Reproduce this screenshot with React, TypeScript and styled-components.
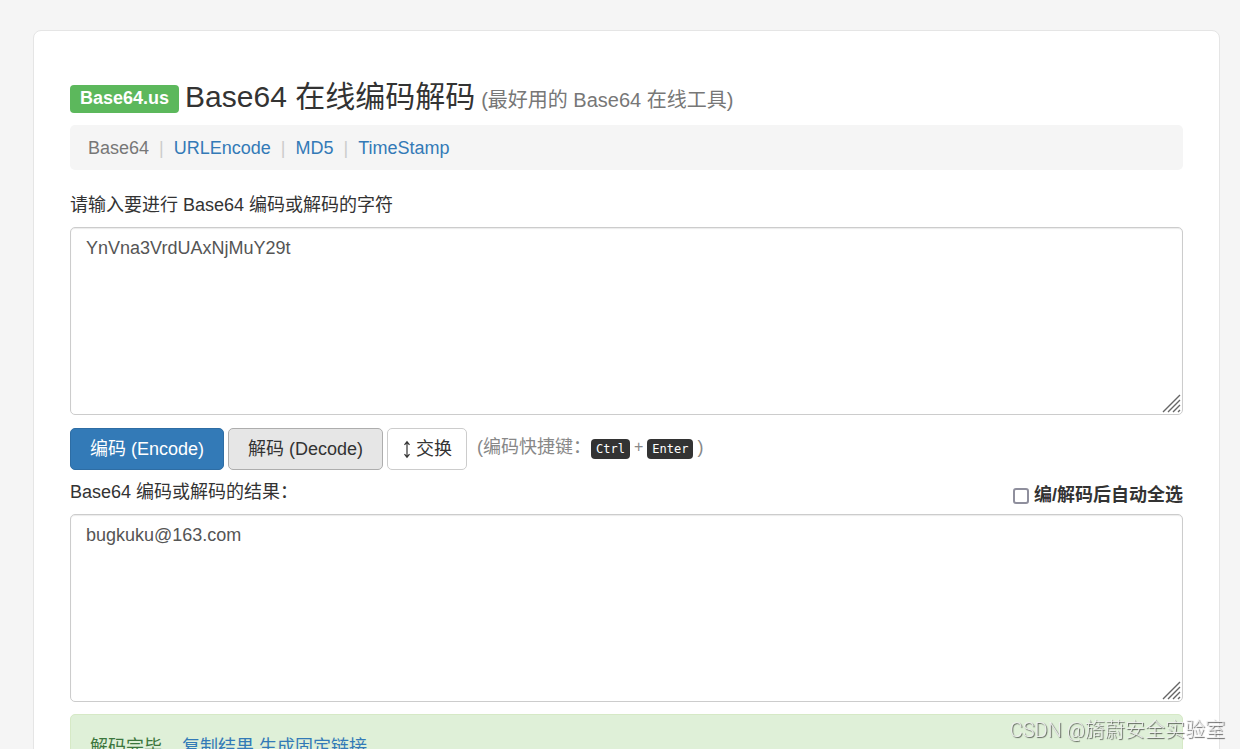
import React, { useState } from "react";
import styled, { createGlobalStyle, css } from "styled-components";

const GlobalStyle = createGlobalStyle`
  *, *::before, *::after { box-sizing: border-box; }
  body {
    margin: 0;
    background: #f5f5f5;
    color: #333;
    font-family: "Liberation Sans", "Noto Sans CJK SC", sans-serif;
    font-size: 18px;
    line-height: 26px;
  }
  button, input, textarea { font: inherit; }
  a { color: #337ab7; text-decoration: none; }
  a:hover { text-decoration: underline; }
`;

const Page = styled.div`
  padding: 30px 20px 30px 33px;
`;

const Card = styled.main`
  padding: 42px 36px 36px;
  background: #fff;
  border: 1px solid #e5e5e5;
  border-radius: 8px;
`;

const Title = styled.h1`
  display: flex;
  align-items: baseline;
  gap: 6px;
  margin: 0 0 1px;
  font-size: 30px;
  font-weight: 400;
  line-height: 47px;
`;

const Badge = styled.span`
  align-self: center;
  padding: 0 10px 2px;
  background: #5cb85c;
  border-radius: 4px;
  color: #fff;
  font-size: 18px;
  font-weight: 700;
  line-height: 26px;
`;

const Subtitle = styled.small`
  color: #777;
  font-size: 20px;
`;

const Nav = styled.nav`
  display: flex;
  align-items: center;
  height: 45px;
  padding: 0 18px;
  background: #f5f5f5;
  border-radius: 5px;
`;

const NavItem = styled.span`
  color: #777;

  & + &::before {
    content: "|";
    padding: 0 10px;
    color: #ccc;
  }
`;

const FieldLabel = styled.label`
  display: block;
`;

const InputLabel = styled(FieldLabel)`
  margin: 22px 0 9px;
`;

const AreaFrame = styled.div`
  position: relative;
  display: flex;
`;

const Area = styled.textarea`
  width: 100%;
  height: 188px;
  padding: 7px 15px;
  background: #fff;
  border: 1px solid #ccc;
  border-radius: 5px;
  box-shadow: inset 0 1px 1px rgba(0, 0, 0, 0.08);
  color: #555;
  outline: none;
  resize: vertical;

  &::-webkit-resizer { background: transparent; }
`;

const Grip = styled.svg`
  position: absolute;
  right: 1px;
  bottom: 1px;
  width: 20px;
  height: 20px;
  pointer-events: none;
`;

const Actions = styled.div`
  display: flex;
  align-items: center;
  gap: 4px;
  margin: 13px 0 9px;
`;

const variants = {
  primary: css`
    background: #337ab7;
    border-color: #2e6da4;
    color: #fff;
  `,
  active: css`
    background: #e6e6e6;
    border-color: #adadad;
    color: #333;
  `,
  plain: css`
    background: #fff;
    border-color: #ccc;
    color: #333;
  `,
};

const Button = styled.button<{ $variant: keyof typeof variants }>`
  display: flex;
  align-items: center;
  gap: 4px;
  height: 42px;
  padding: 0 ${(p) => (p.$variant === "plain" ? 14 : 19)}px;
  border: 1px solid;
  border-radius: 5px;
  cursor: pointer;
  ${(p) => variants[p.$variant]}
`;

const Hint = styled.span`
  display: flex;
  align-items: center;
  margin: 0 0 4px 6px;
  color: #888;
`;

const Plus = styled.span`
  padding: 0 4px;
  font-size: 16px;
`;

const Key = styled.kbd`
  padding: 0 5px;
  margin-top: 4px;
  background: #333;
  border-radius: 4px;
  color: #fff;
  font-family: "DejaVu Sans Mono", monospace;
  font-size: 12px;
  line-height: 20px;
`;

const Paren = styled.span`
  padding-left: 4px;
`;

const ResultHead = styled.div`
  display: flex;
  justify-content: space-between;
  align-items: center;
  margin-bottom: 9px;
`;

const CheckLabel = styled.label`
  display: flex;
  align-items: center;
  gap: 5px;
  margin-top: 3px;
  margin-bottom: -3px;
  font-weight: 700;
`;

const Check = styled.input`
  appearance: none;
  width: 16px;
  height: 16px;
  margin: 1px 0 0;
  background: #fff;
  border: 2px solid #8f8f9d;
  border-radius: 3px;

  &:checked { background: #337ab7; }
`;

const Alert = styled.div`
  display: flex;
  gap: 5px;
  margin-top: 12px;
  padding: 19px 19px 18px;
  background: #dff0d8;
  border: 1px solid #d6e9c6;
  border-radius: 5px;
  color: #3c763d;
`;

const Status = styled.span`
  margin-right: 15px;
`;

const Watermark = styled.div`
  position: fixed;
  right: 15px;
  bottom: 5px;
  color: rgba(240, 240, 240, 0.9);
  font-family: Roboto, "Noto Sans CJK SC", sans-serif;
  font-size: 20px;
  font-weight: 300;
  line-height: 28px;
  text-shadow: 1px 1px 1px rgba(0, 0, 0, 0.6);
  pointer-events: none;
`;

function TextArea(props: React.TextareaHTMLAttributes<HTMLTextAreaElement>) {
  return (
    <AreaFrame>
      <Area spellCheck={false} {...props} />
      <Grip viewBox="0 0 20 20" stroke="#666" strokeWidth="1.4" aria-hidden="true">
        <path d="M1 18 18 1M6 18 18 6M11 18 18 11M16 18 18 16" fill="none" />
      </Grip>
    </AreaFrame>
  );
}

export default function App() {
  const [source, setSource] = useState("YnVna3VrdUAxNjMuY29t");
  const [result, setResult] = useState("bugkuku@163.com");

  const encode = () => setResult(btoa(unescape(encodeURIComponent(source))));
  const decode = () => {
    try {
      setResult(decodeURIComponent(escape(atob(source))));
    } catch {
      setResult("");
    }
  };
  const swap = () => {
    setSource(result);
    setResult(source);
  };

  return (
    <>
      <GlobalStyle />
      <Page>
        <Card>
          <Title>
            <Badge>Base64.us</Badge>
            <span>Base64 在线编码解码</span>
            <Subtitle>(最好用的 Base64 在线工具)</Subtitle>
          </Title>
          <Nav>
            <NavItem>Base64</NavItem>
            <NavItem><a href="#urlencode">URLEncode</a></NavItem>
            <NavItem><a href="#md5">MD5</a></NavItem>
            <NavItem><a href="#timestamp">TimeStamp</a></NavItem>
          </Nav>
          <InputLabel htmlFor="source">请输入要进行 Base64 编码或解码的字符</InputLabel>
          <TextArea id="source" value={source} onChange={(e) => setSource(e.target.value)} />
          <Actions>
            <Button type="button" $variant="primary" onClick={encode}>编码 (Encode)</Button>
            <Button type="button" $variant="active" onClick={decode}>解码 (Decode)</Button>
            <Button type="button" $variant="plain" onClick={swap}>
              <svg width="10" height="20" viewBox="0 0 10 20" fill="none" stroke="currentColor" strokeWidth="1.2" aria-hidden="true">
                <path d="M5 3v15M2.5 5.8 5 2.8l2.5 3M2.5 15.2 5 18.2l2.5-3" />
              </svg>
              交换
            </Button>
            <Hint>
              <span>(编码快捷键：</span>
              <Key>Ctrl</Key>
              <Plus>+</Plus>
              <Key>Enter</Key>
              <Paren>)</Paren>
            </Hint>
          </Actions>
          <ResultHead>
            <FieldLabel htmlFor="result">Base64 编码或解码的结果：</FieldLabel>
            <CheckLabel>
              <Check type="checkbox" />
              编/解码后自动全选
            </CheckLabel>
          </ResultHead>
          <TextArea id="result" value={result} onChange={(e) => setResult(e.target.value)} />
          <Alert role="status">
            <Status>解码完毕</Status>
            <a href="#copy">复制结果</a>
            <a href="#link">生成固定链接</a>
          </Alert>
        </Card>
      </Page>
      <Watermark>CSDN @旖蔚安全实验室</Watermark>
    </>
  );
}
